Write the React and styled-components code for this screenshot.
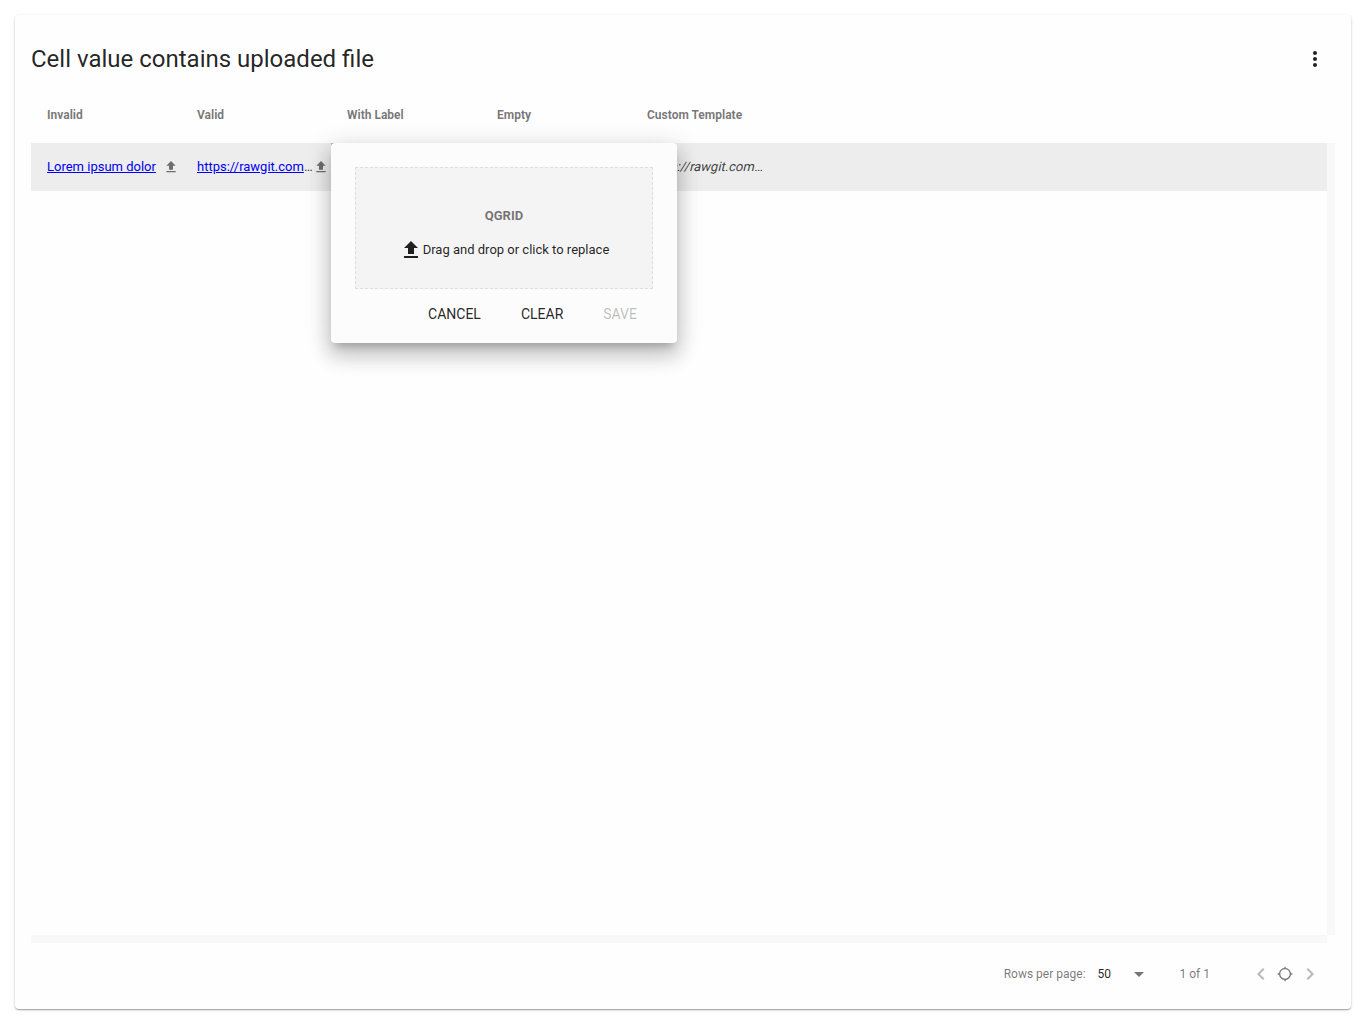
import React from "react";
import styled, { createGlobalStyle } from "styled-components";

const GlobalStyle = createGlobalStyle`
  body {
    margin: 0;
    background: #fff;
    font-family: Roboto, "Liberation Sans", sans-serif;
    color: rgba(0, 0, 0, 0.87);
  }
`;

const Page = styled.div`
  box-sizing: border-box;
  height: 1024px;
  padding: 15px;
  display: flex;
`;

const Card = styled.main`
  box-sizing: border-box;
  flex: 1;
  height: 994px;
  padding: 0 16px;
  display: flex;
  flex-direction: column;
  background: #fefefe;
  border-radius: 4px;
  box-shadow: 0 1px 3px 0 rgba(0, 0, 0, 0.2), 0 1px 1px 0 rgba(0, 0, 0, 0.14),
    0 2px 1px -1px rgba(0, 0, 0, 0.12);
`;

const Toolbar = styled.header`
  height: 72px;
  padding: 8px 8px 0 0;
  display: flex;
  align-items: center;
  justify-content: space-between;
`;

const Title = styled.h2`
  margin: 0;
  font-size: 24px;
  font-weight: 400;
  line-height: 32px;
`;

const IconButton = styled.button`
  width: 24px;
  height: 24px;
  padding: 0;
  border: 0;
  background: none;
  display: flex;
  align-items: center;
  justify-content: center;
  color: ${(p) => p.$color || "rgba(0,0,0,0.87)"};
`;

const Glyph = styled.svg`
  flex: none;
  display: block;
  width: ${(p) => p.$size || 24}px;
  height: ${(p) => p.$size || 24}px;
  fill: currentColor;
`;

const Icon = ({ d, size }) => (
  <Glyph $size={size} viewBox="0 0 24 24">
    <path d={d} />
  </Glyph>
);

const HeadRow = styled.div`
  height: 48px;
  display: grid;
  grid-template-columns: repeat(5, 150px);
  align-items: start;
`;

const HeadCell = styled.div`
  padding: 12px 0 0 16px;
  font-size: 12px;
  font-weight: 700;
  line-height: 16px;
  color: rgba(0, 0, 0, 0.54);
`;

const Body = styled.section`
  height: 800px;
  display: grid;
  grid-template-columns: 1fr 8px;
  grid-template-rows: 1fr 8px;
`;

const Track = styled.div`
  background: #f8f8f8;
`;

const Row = styled.div`
  height: 48px;
  background: #ededed;
  display: grid;
  grid-template-columns: repeat(5, 150px);
`;

const Cell = styled.div`
  position: relative;
  box-sizing: border-box;
  height: 48px;
  padding: 0 2px 0 16px;
  display: flex;
  align-items: center;
  justify-content: space-between;
  white-space: nowrap;
  font-size: 13px;
  color: rgba(0, 0, 0, 0.76);
`;

const CellText = styled.span`
  padding-bottom: 2px;
`;

const CustomText = styled(CellText)`
  transform: skewX(-13deg);
  transform-origin: 0 12px;
`;

const Link = styled.a`
  color: #0000ee;
  text-decoration: underline;
`;

const EditingCell = styled(Cell)`
  padding: 0;
  border: 1px solid #9fa8da;
  z-index: 1;
`;

const Dialog = styled.div`
  position: absolute;
  z-index: 2;
  top: -1px;
  left: -1px;
  box-sizing: border-box;
  width: 346px;
  height: 200px;
  padding: 24px 24px 0;
  background: #fcfcfc;
  border-radius: 4px;
  color: rgba(0, 0, 0, 0.87);
  box-shadow: 0 7px 8px -4px rgba(0, 0, 0, 0.2),
    0 13px 19px 2px rgba(0, 0, 0, 0.14), 0 5px 24px 4px rgba(0, 0, 0, 0.12);
`;

const DropZone = styled.div`
  box-sizing: border-box;
  height: 122px;
  padding-top: 40px;
  display: flex;
  flex-direction: column;
  align-items: center;
  background: #f4f4f4;
  border: 1px dashed #dedede;
`;

const FileName = styled.div`
  height: 16px;
  line-height: 16px;
  font-weight: 700;
  color: rgba(0, 0, 0, 0.54);
`;

const Hint = styled.div`
  margin-top: 14px;
  height: 24px;
  display: flex;
  align-items: center;
`;

const Actions = styled.div`
  height: 50px;
  padding-right: 16px;
  display: flex;
  align-items: center;
  justify-content: flex-end;
  gap: 40px;
`;

const Action = styled.button`
  padding: 0;
  border: 0;
  background: none;
  font: 400 14px/20px Roboto, sans-serif;
  color: ${(p) => (p.disabled ? "rgba(0,0,0,0.26)" : "rgba(0,0,0,0.87)")};
`;

const Pager = styled.footer`
  height: 62px;
  padding-right: 13px;
  display: flex;
  align-items: center;
  justify-content: flex-end;
  font-size: 12px;
  color: rgba(0, 0, 0, 0.54);
`;

const PageSize = styled.div`
  width: 53px;
  margin: 0 29px 0 12px;
  display: flex;
  align-items: center;
  justify-content: space-between;
`;

const PageSizeValue = styled.span`
  color: rgba(0, 0, 0, 0.87);
`;

const PagerNav = styled.div`
  margin-left: 39px;
  display: grid;
  grid-template-columns: 24px 25px 24px;
`;

const paths = {
  more: "M12 8c1.1 0 2-.9 2-2s-.9-2-2-2-2 .9-2 2 .9 2 2 2zm0 2c-1.1 0-2 .9-2 2s.9 2 2 2 2-.9 2-2-.9-2-2-2zm0 6c-1.1 0-2 .9-2 2s.9 2 2 2 2-.9 2-2-.9-2-2-2z",
  upload: "M9 16h6v-6h4l-7-7-7 7h4zm-4 2h14v2H5z",
  down: "M7 10l5 5 5-5z",
  left: "M15.41 7.41L14 6l-6 6 6 6 1.41-1.41L10.83 12z",
  right: "M10 6L8.59 7.41 13.17 12l-4.58 4.59L10 18l6-6z",
  target:
    "M20.94 11c-.46-4.17-3.77-7.48-7.94-7.94V1h-2v2.06C6.83 3.52 3.52 6.83 3.06 11H1v2h2.06c.46 4.17 3.77 7.48 7.94 7.94V23h2v-2.06c4.17-.46 7.48-3.77 7.94-7.94H23v-2h-2.06zM12 19c-3.87 0-7-3.13-7-7s3.13-7 7-7 7 3.13 7 7-3.13 7-7 7z",
};

const columns = ["Invalid", "Valid", "With Label", "Empty", "Custom Template"];

function FileEditor() {
  return (
    <Dialog>
      <DropZone>
        <FileName>QGRID</FileName>
        <Hint>
          <Icon d={paths.upload} />
          <CellText>Drag and drop or click to replace</CellText>
        </Hint>
      </DropZone>
      <Actions>
        <Action>CANCEL</Action>
        <Action>CLEAR</Action>
        <Action disabled>SAVE</Action>
      </Actions>
    </Dialog>
  );
}

const UploadMark = styled.span`
  color: rgba(0, 0, 0, 0.54);
`;

function FileCell({ label, clipped }) {
  return (
    <Cell>
      <CellText>
        <Link>{label}</Link>
        {clipped && "…"}
      </CellText>
      <UploadMark>
        <Icon d={paths.upload} size={16} />
      </UploadMark>
    </Cell>
  );
}

export default function App() {
  return (
    <>
      <GlobalStyle />
      <Page>
        <Card>
          <Toolbar>
            <Title>Cell value contains uploaded file</Title>
            <IconButton aria-label="Menu">
              <Icon d={paths.more} />
            </IconButton>
          </Toolbar>
          <HeadRow>
            {columns.map((c) => (
              <HeadCell key={c}>{c}</HeadCell>
            ))}
          </HeadRow>
          <Body>
            <div>
              <Row>
                <FileCell label="Lorem ipsum dolor" />
                <FileCell label="https://rawgit.com" clipped />
                <EditingCell>
                  <FileEditor />
                </EditingCell>
                <Cell />
                <Cell>
                  <CustomText>https://rawgit.com…</CustomText>
                </Cell>
              </Row>
            </div>
            <Track />
            <Track />
          </Body>
          <Pager>
            <span>Rows per page:</span>
            <PageSize>
              <PageSizeValue>50</PageSizeValue>
              <Icon d={paths.down} />
            </PageSize>
            <span>1 of 1</span>
            <PagerNav>
              <IconButton $color="rgba(0,0,0,0.28)" aria-label="Previous">
                <Icon d={paths.left} />
              </IconButton>
              <IconButton $color="rgba(0,0,0,0.54)" aria-label="Current">
                <Icon d={paths.target} size={16} />
              </IconButton>
              <IconButton $color="rgba(0,0,0,0.28)" aria-label="Next">
                <Icon d={paths.right} />
              </IconButton>
            </PagerNav>
          </Pager>
        </Card>
      </Page>
    </>
  );
}
